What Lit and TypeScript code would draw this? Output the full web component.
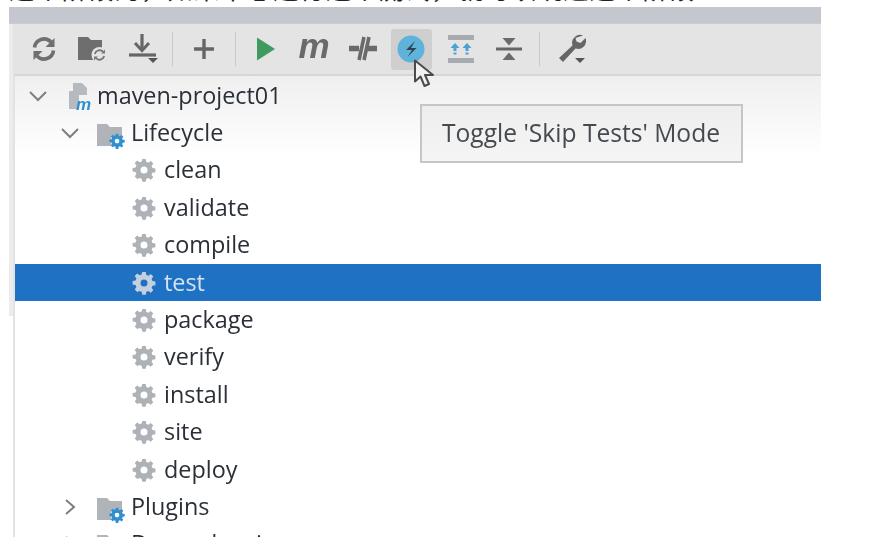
import { LitElement, html, css, svg } from "lit";
import { customElement } from "lit/decorators.js";

const GEAR = "M10.2 1h3.600l.5 3a8.2 8.2 0 0 1 2 .85l2.500-1.750 2.500 2.500-1.750 2.500c.38.63.66 1.300.85 2l3 .5v3.600l-3 .5a8.2 8.2 0 0 1-.85 2l1.750 2.500-2.500 2.500-2.500-1.750a8.2 8.2 0 0 1-2 .85l-.5 3h-3.600l-.5-3a8.2 8.2 0 0 1-2-.85L5.200 21.100l-2.500-2.500 1.750-2.500a8.2 8.2 0 0 1-.85-2l-3-.5v-3.600l3-.5c.19-.7.47-1.370.85-2L2.700 5.100l2.500-2.500 2.500 1.750a8.2 8.2 0 0 1 2-.85zM12 8.500a3.500 3.500 0 1 0 0 7 3.500 3.500 0 0 0 0-7z";

const ic = (w: number, h: number, body: unknown) =>
  html`<svg class="ic" width=${w} height=${h} viewBox="0 0 ${w} ${h}">${body}</svg>`;

const drop = (x: number, y: number) => svg`<path d="M${x} ${y}h10l-5 5z" fill="#555"/>`;

const icons = {
  sync: ic(28, 28, svg`
    <path d="M4.500 12.500a9.600 9.600 0 0 1 16.500-5.500" fill="none" stroke="#6f6f6f" stroke-width="3.600"/>
    <path d="M24.500 3v9h-9z" fill="#6f6f6f"/>
    <path d="M23.500 15.500a9.600 9.600 0 0 1-16.500 5.500" fill="none" stroke="#6f6f6f" stroke-width="3.600"/>
    <path d="M3.500 25v-9h9z" fill="#6f6f6f"/>`),
  folder: ic(32, 30, svg`
    <path d="M1 3h10l3 3h11v12h-7v8H1z" fill="#6e6e6e"/>
    <circle cx="22.500" cy="21" r="8" fill="#e4e4e4"/>
    <path d="M17.800 20a5 5 0 0 1 8.400-2.200M27.200 22a5 5 0 0 1-8.400 2.200" fill="none" stroke="#777" stroke-width="1.800"/>
    <path d="M28 15.500v4h-4zM17 26.500v-4h4z" fill="#777"/>`),
  download: ic(32, 32, svg`
    <path d="M14 1v14" stroke="#666" stroke-width="3.200"/>
    <path d="M7 10l7 7.500 7-7.500" fill="none" stroke="#666" stroke-width="3"/>
    <path d="M1 22h27" stroke="#666" stroke-width="3.200"/>
    ${drop(20, 25)}`),
  plus: ic(22, 22, svg`<path d="M11 1v20M1 11h20" stroke="#666" stroke-width="3.400"/>`),
  play: ic(22, 26, svg`<path d="M2 1.500l18 11.500-18 11.500z" fill="#419b60"/>`),
  offline: ic(30, 30, svg`
    <path d="M1 14.500h10M19 14.500h10" stroke="#6a6a6a" stroke-width="5.500"/>
    <path d="M16 3l-5 23M21 3l-5 23" stroke="#6a6a6a" stroke-width="3.600"/>`),
  bolt: ic(28, 28, svg`
    <circle cx="14" cy="14" r="13.500" fill="#5fb3da"/>
    <path d="M18 6l-9 9h6l-4.500 7 9-9h-5.500z" fill="#30424f"/>`),
  toggle: ic(28, 28, svg`
    <rect x="1" y="0" width="26" height="5" fill="#a8abaf"/>
    <rect x="1" y="23" width="26" height="5" fill="#a8abaf"/>
    <path d="M8 8l4.500 5h-3v3h-3v-3h-3zM6.500 17.500h3v2h-3zM20 8l4.500 5h-3v3h-3v-3h-3zM18.500 17.500h3v2h-3z" fill="#4da2d4"/>`),
  collapse: ic(26, 26, svg`
    <path d="M0 13h26" stroke="#666" stroke-width="3"/>
    <path d="M6.500 2h13L13 9.500zM6.500 24h13L13 16.500z" fill="#6b6b6b"/>`),
  wrench: ic(32, 32, svg`
    <path d="M27 2.500a8 8 0 0 0-10.500 10L3 25l4 4 12.500-13.500A8 8 0 0 0 29.500 5l-5 5-4-1.500L19.500 5z" fill="#666"/>
    ${drop(19, 25)}`),
};

const chevDown = ic(20, 14, svg`<path d="M2 3l8 8 8-8" fill="none" stroke="#7e7e7e" stroke-width="2"/>`);
const chevRight = ic(20, 20, svg`<path d="M6 3l8 7-8 7" fill="none" stroke="#7e7e7e" stroke-width="2"/>`);
const gear = ic(24, 24, svg`<path d=${GEAR} fill="currentColor" fill-rule="evenodd"/>`);
const mavenIcon = ic(26, 30, svg`
  <path d="M6 2h9l5 5v7h-8v14H2V10h4z" fill="#b6babf"/>
  <text x="9" y="29" class="mtx">m</text>`);
const folderGear = ic(30, 30, svg`
  <path d="M1 6h10l3 3h12v10H15v9H1z" fill="#b0b4b9"/>
  <g transform="translate(13 15) scale(.67)"><path d=${GEAR} fill="#2f8fcf" fill-rule="evenodd"/></g>`);

@customElement("app-root")
export class AppRoot extends LitElement {
  static styles = css`
    :host { display: block; width: 895px; height: 557px; background: #fff; overflow: hidden; position: relative;
      font-family: "Open Sans", "Noto Sans", "Liberation Sans", sans-serif; }
    .caption { height: 7px; overflow: hidden; display: flex; align-items: flex-end; padding-left: 9px; }
    .caption span { font: 25.4px/32px "Noto Sans CJK SC", sans-serif; letter-spacing: 1px; color: #222; white-space: nowrap; flex: none; margin-bottom: 3px; }
    .frame { width: 812px; height: 530px; margin-left: 9px; display: flex; flex-direction: column; overflow: hidden; filter: blur(.55px); }
    .head { height: 16px; flex: none; background: #c4c7cd; border-bottom: 1px solid #ccc; }
    .body { flex: 1; display: flex; min-height: 0; }
    .stripe { width: 6px; flex: none; background:
      linear-gradient(#ececec, #ececec) 0 0 / 4px 292px no-repeat,
      linear-gradient(90deg, #fff 0 4px, #e3e3e3 4px); }
    .main { flex: 1; display: flex; flex-direction: column; min-width: 0; }
    .toolbar { height: 52px; flex: none; box-sizing: border-box; background: #e4e4e4; border-bottom: 2px solid #d6d6d6;
      display: grid; grid-template-columns: 40px 58px 44px 12px 52px 10px 52px 44px 54px 42px 58px 38px 22px 44px;
      justify-items: center; align-items: center; padding-left: 9px; }
    .btn { display: flex; align-items: center; justify-content: center; }
    .btn.on { width: 41px; height: 41px; background: #cfcfcf; border-radius: 3px; }
    .sep { width: 1px; height: 34px; background: #c9c9c9; }
    .m { font: italic 700 35px/40px "Liberation Sans", sans-serif; color: #6a6a6a; margin-top: -6px; }
    .ic { display: block; flex: none; overflow: visible; }
    .mtx { font: italic 700 17px "Liberation Sans", sans-serif; fill: #2f8fcf; }
    .tree { flex: 1; overflow: hidden; padding-top: 1px; background: linear-gradient(#efefef, #fff 80px); font-size: 23.4px; color: #2b3038; }
    .row { height: 37.4px; display: flex; align-items: center; white-space: nowrap; box-sizing: border-box; }
    .label { margin-bottom: 2px; }
    .d0 { padding-left: 13px; }
    .d1 { padding-left: 45px; }
    .d2 { padding-left: 117px; gap: 8px; }
    .d2 .ic { color: #aeb2b6; }
    .chev { width: 20px; flex: none; }
    .d0 .chev { margin-right: 19px; }
    .d0 .label { margin-left: 4px; }
    .d1 .chev { margin-right: 16px; }
    .d1 .label { margin-left: 5px; }
    .sel { background: #1f71c3; color: #d3e2f0; }
    .sel .ic { color: #c3d0dd; }
    .tip { position: absolute; left: 420px; top: 104px; width: 323px; height: 59px; box-sizing: border-box; border: 2px solid #c6c6c6;
      background: linear-gradient(#eeeeee, #f5f5f5); color: #444a50; font-size: 24.6px; display: flex; align-items: center;
      padding: 0 0 2px 20px; filter: blur(.55px); white-space: nowrap; }
    .cursor { position: absolute; left: 413px; top: 59px; filter: blur(.4px); }
  `;

  private row(cls: string, chev: unknown, icon: unknown, text: string) {
    return html`<div class="row ${cls}">
      ${chev ? html`<span class="chev">${chev}</span>` : ""}${icon}<span class="label">${text}</span>
    </div>`;
  }

  render() {
    const phases = ["clean", "validate", "compile", "test", "package", "verify", "install", "site", "deploy"];
    return html`
      <div class="caption"><span>这个阶段的，如果不想运行这个测试，就可以跳过这个阶段</span></div>
      <div class="frame">
        <div class="head"></div>
        <div class="body">
          <div class="stripe"></div>
          <div class="main">
            <div class="toolbar">
              <span class="btn">${icons.sync}</span>
              <span class="btn">${icons.folder}</span>
              <span class="btn">${icons.download}</span>
              <span class="sep"></span>
              <span class="btn">${icons.plus}</span>
              <span class="sep"></span>
              <span class="btn">${icons.play}</span>
              <span class="m">m</span>
              <span class="btn">${icons.offline}</span>
              <span class="btn on">${icons.bolt}</span>
              <span class="btn">${icons.toggle}</span>
              <span class="btn">${icons.collapse}</span>
              <span class="sep"></span>
              <span class="btn">${icons.wrench}</span>
            </div>
            <div class="tree">
              ${this.row("d0", chevDown, mavenIcon, "maven-project01")}
              ${this.row("d1", chevDown, folderGear, "Lifecycle")}
              ${phases.map((p) => this.row(p === "test" ? "d2 sel" : "d2", null, gear, p))}
              ${this.row("d1", chevRight, folderGear, "Plugins")}
              ${this.row("d1", chevRight, folderGear, "Dependencies")}
            </div>
          </div>
        </div>
      </div>
      <div class="tip">Toggle 'Skip Tests' Mode</div>
      <svg class="cursor" width="22" height="30" viewBox="0 0 22 30">
        <path d="M2 1.500v21l5.500-5 4 9.500 4.500-2-4-9h8z" fill="#f2f2f2" stroke="#4b4b4b" stroke-width="2" stroke-linejoin="round"/>
      </svg>
    `;
  }
}
